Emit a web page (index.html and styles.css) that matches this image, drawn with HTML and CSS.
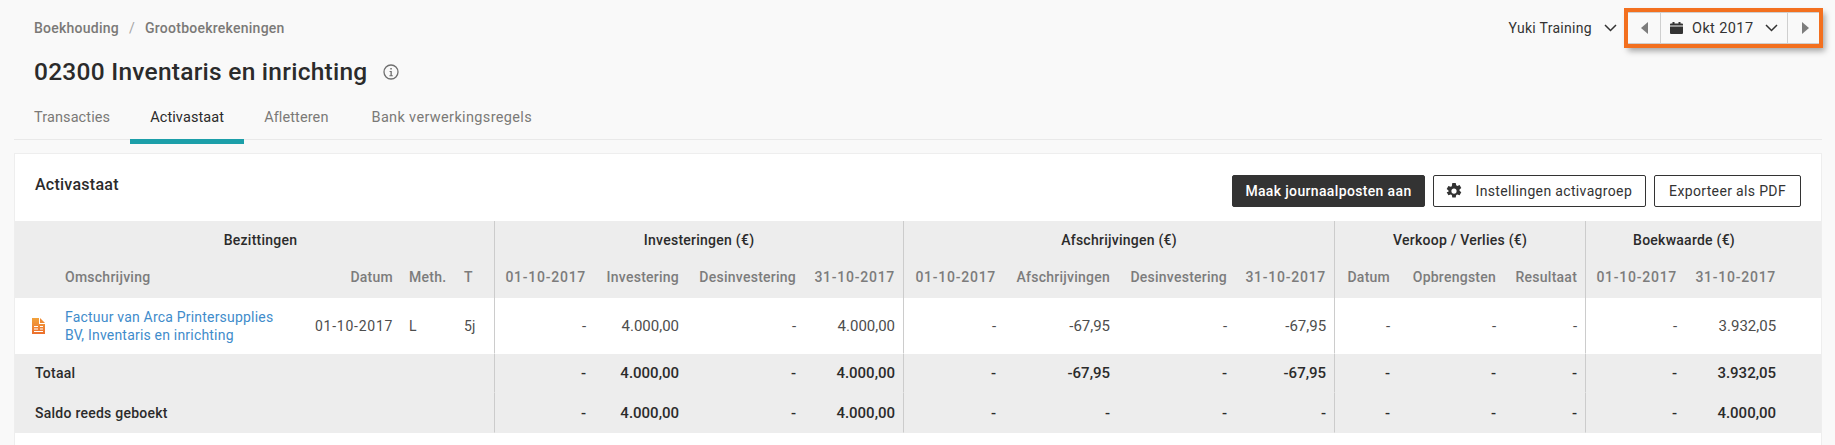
FILE: index.html
```html
<!DOCTYPE html>
<html lang="nl">
<head>
<meta charset="utf-8">
<title>Activastaat</title>
<link rel="stylesheet" href="styles.css">
</head>
<body>
<div class="page">
  <header class="top">
    <div class="heading">
      <nav class="crumbs"><span>Boekhouding</span><span class="slash">/</span><span>Grootboekrekeningen</span></nav>
      <h1 class="title">02300 Inventaris en inrichting
        <svg class="info" viewBox="0 0 16 16" width="16" height="16"><circle cx="8" cy="8" r="7" fill="none" stroke="#6f6f6f" stroke-width="1.3"/><path d="M6.6 7h2.2v4.2h1v1H6.4v-1h1.1V8H6.6zM7.3 3.9h1.5v1.6H7.3z" fill="#6f6f6f"/></svg>
      </h1>
    </div>
    <div class="tools">
      <div class="company">Yuki Training
        <svg class="chev" viewBox="0 0 13 8" width="13" height="8"><path d="M1 1l5.5 5.5L12 1" fill="none" stroke="#333" stroke-width="1.5"/></svg>
      </div>
      <div class="period">
        <div class="arrow"><svg viewBox="0 0 7 12" width="7" height="12"><path d="M7 0v12L0 6z" fill="#7d7d7d"/></svg></div>
        <div class="month">
          <svg class="cal" viewBox="0 0 13 12" width="13" height="12"><path d="M0 4.5h13V11a1 1 0 0 1-1 1H1a1 1 0 0 1-1-1zM1 1.5h1.5V0h2v1.500h4V0h2v1.500H12a1 1 0 0 1 1 1v1H0v-1a1 1 0 0 1 1-1z" fill="#333"/></svg>
          <span class="month-label">Okt 2017</span>
          <svg class="chev" viewBox="0 0 13 8" width="13" height="8"><path d="M1 1l5.500 5.500L12 1" fill="none" stroke="#333" stroke-width="1.500"/></svg>
        </div>
        <div class="arrow next"><svg viewBox="0 0 7 12" width="7" height="12"><path d="M0 0v12l7-6z" fill="#7d7d7d"/></svg></div>
      </div>
    </div>
  </header>

  <nav class="tabs">
    <a class="tab">Transacties</a>
    <a class="tab active">Activastaat</a>
    <a class="tab">Afletteren</a>
    <a class="tab">Bank verwerkingsregels</a>
  </nav>

  <section class="card">
    <div class="card-head">
      <h2 class="card-title">Activastaat</h2>
      <div class="actions">
        <button class="btn dark">Maak journaalposten aan</button>
        <button class="btn gear-btn">
          <svg viewBox="0 0 16 16" width="16" height="16"><path fill="#333" fill-rule="evenodd" d="M6.300 0h3.400l.5 2.300 1.100.6 2.300-.8 1.700 3-1.800 1.500v1.200l1.800 1.500-1.700 3-2.300-.8-1.100.6-.5 2.300H6.300l-.5-2.300-1.100-.6-2.300.8-1.700-3L2.500 8.700V7.500L.7 6l1.700-3 2.300.8 1.100-.6zM8 5.500a2.600 2.600 0 1 0 0 5.200 2.600 2.600 0 0 0 0-5.200z"/></svg>
          Instellingen activagroep</button>
        <button class="btn pdf">Exporteer als PDF</button>
      </div>
    </div>

    <table class="sheet">
      <colgroup>
        <col class="c42"><col class="c250"><col class="c94"><col class="c55"><col class="c39">
        <col class="c99"><col class="c93"><col class="c117"><col class="c100">
        <col class="c100"><col class="c114"><col class="c117"><col class="c100">
        <col class="c63"><col class="c106"><col class="c82">
        <col class="c99"><col class="c99"><col>
      </colgroup>
      <thead>
        <tr class="groups">
          <th colspan="5" class="sep first">Bezittingen</th>
          <th colspan="4" class="sep">Investeringen (€)</th>
          <th colspan="4" class="sep">Afschrijvingen (€)</th>
          <th colspan="3" class="sep">Verkoop / Verlies (€)</th>
          <th colspan="3" class="book">Boekwaarde (€)</th>
        </tr>
        <tr class="subs">
          <th></th><th class="l">Omschrijving</th><th>Datum</th><th class="l">Meth.</th><th class="l sep">T</th>
          <th class="dt">01-10-2017</th><th>Investering</th><th>Desinvestering</th><th class="sep dt">31-10-2017</th>
          <th class="dt">01-10-2017</th><th>Afschrijvingen</th><th>Desinvestering</th><th class="sep dt">31-10-2017</th>
          <th>Datum</th><th>Opbrengsten</th><th class="sep">Resultaat</th>
          <th class="dt">01-10-2017</th><th class="dt">31-10-2017</th><th></th>
        </tr>
      </thead>
      <tbody>
        <tr class="item">
          <td class="ic"><svg viewBox="0 0 13 16" width="13" height="16"><defs><linearGradient id="doc" x1="0" y1="0" x2="0" y2="1"><stop offset="0" stop-color="#f2a23c"/><stop offset="1" stop-color="#ec6f2d"/></linearGradient></defs><path fill="url(#doc)" d="M0 0h7v6h6v10H0z"/><path fill="#ee8a35" d="M8 0l5 5H8z"/><path fill="#fff" d="M2 8h4v1H2zM8 8h3v1H8zM2 10.500h4v1H2zM8 10.500h3v1H8zM2 13h9v1H2z"/></svg></td>
          <td class="l desc"><a class="link">Factuur van Arca Printersupplies BV, Inventaris en inrichting</a></td>
          <td class="dt">01-10-2017</td><td class="l">L</td><td class="l sep">5j</td>
          <td>-</td><td>4.000,00</td><td>-</td><td class="sep">4.000,00</td>
          <td>-</td><td>-67,95</td><td>-</td><td class="sep">-67,95</td>
          <td>-</td><td>-</td><td class="sep">-</td>
          <td>-</td><td>3.932,05</td><td></td>
        </tr>
        <tr class="sum">
          <td colspan="5" class="l name sep">Totaal</td>
          <td>-</td><td>4.000,00</td><td>-</td><td class="sep">4.000,00</td>
          <td>-</td><td>-67,95</td><td>-</td><td class="sep">-67,95</td>
          <td>-</td><td>-</td><td class="sep">-</td>
          <td>-</td><td>3.932,05</td><td></td>
        </tr>
        <tr class="sum">
          <td colspan="5" class="l name sep">Saldo reeds geboekt</td>
          <td>-</td><td>4.000,00</td><td>-</td><td class="sep">4.000,00</td>
          <td>-</td><td>-</td><td>-</td><td class="sep">-</td>
          <td>-</td><td>-</td><td class="sep">-</td>
          <td>-</td><td>4.000,00</td><td></td>
        </tr>
      </tbody>
    </table>
  </section>
</div>
</body>
</html>
```
FILE: styles.css
```css
* { box-sizing: border-box; }
html, body { height: 100%; }
body {
  margin: 0;
  overflow: hidden;
  background: #f9f9f9;
  font-family: Roboto, "Liberation Sans", sans-serif;
  font-size: 14px;
  letter-spacing: .25px;
  color: #333;
}
.page { padding: 12px 13px 0 14px; }

.top { display: flex; justify-content: space-between; align-items: flex-start; }
.heading { padding-left: 20px; padding-top: 6px; }
.crumbs { display: flex; line-height: 20px; color: #7b7977; font-weight: 500; }
.slash { margin: 0 10px; font-weight: 400; color: #a5a5a5; }
.title {
  display: flex; align-items: center; gap: 15px;
  margin: 20px 0 0; font-size: 24.500px; line-height: 28px; font-weight: 500; color: #2b2b2b;
}

.tools { display: flex; align-items: center; }
.company { display: flex; align-items: center; gap: 12px; color: #333; margin-right: 11px; letter-spacing: .3px; }
.period {
  display: flex; align-items: stretch; height: 32px; width: 191px; margin-right: 3px;
  border-top: 1px solid #cfcfcf; border-bottom: 1px solid #cfcfcf;
  outline: 4px solid #f3701f;
  box-shadow: 3px 4px 6px 3px rgba(0, 0, 0, .35);
  background: #f9f9f9;
}
.arrow { flex: 0 0 32px; display: flex; align-items: center; justify-content: center; }
.arrow.next { flex-basis: 31px; padding-left: 4px; }
.month {
  flex: 1; display: flex; align-items: center;
  padding: 0 9px; border-left: 1px solid #cfcfcf; border-right: 1px solid #cfcfcf;
}
.month-label { margin-left: 9px; flex: 1; font-size: 14.500px; letter-spacing: .4px; }

.tabs { display: flex; height: 33px; margin-top: 21px; border-bottom: 1px solid #e9e9e9; }
.tab { height: 37px; padding: 0 20px; line-height: 22px; font-size: 14.500px; letter-spacing: .1px; color: #7b7977; }
.tab.active { color: #2b2b2b; border-bottom: 5px solid #1c9fa9; }
.tab:last-child { margin-left: 3px; letter-spacing: .35px; }

.card { margin-top: 13px; height: 300px; background: #fff; border: 1px solid #eee; border-bottom: 0; }
.card-head { display: flex; justify-content: space-between; padding: 21px 20px 14px 20px; }
.card-title { margin: 0; font-size: 16px; line-height: 20px; font-weight: 500; color: #2b2b2b; }
.actions { display: flex; gap: 8px; }
.btn {
  display: flex; align-items: center; gap: 14px;
  height: 32px; padding: 0 13px 0 12px;
  background: #fff; border: 1px solid #333; border-radius: 2px;
  font: inherit; letter-spacing: .35px; color: #333;
}
.btn.dark { padding: 0 12px; background: #333; color: #fff; font-weight: 500; }
.btn.pdf { padding: 0 14px; }

.sheet { width: 100%; table-layout: fixed; border-collapse: separate; border-spacing: 0; }
.c39 { width: 39px; } .c42 { width: 42px; } .c55 { width: 55px; } .c63 { width: 63px; }
.c82 { width: 82px; } .c93 { width: 93px; } .c94 { width: 94px; } .c99 { width: 99px; }
.c100 { width: 100px; } .c106 { width: 106px; } .c114 { width: 114px; } .c117 { width: 117px; }
.c250 { width: 250px; }

.sheet th, .sheet td { padding: 0 8px; text-align: right; white-space: nowrap; }
.sheet .l { text-align: left; }
.sheet .sep { border-right: 1px solid #ccc; }
.sheet thead { background: #ededed; }
.groups th { height: 37px; text-align: center; font-weight: 500; color: #2b2b2b; }
.groups .first { padding-left: 20px; }
.groups .book { padding-right: 47px; }
.subs th { height: 40px; padding-bottom: 2px; font-weight: 500; color: #7c7c7c; }
.sheet .dt { letter-spacing: .75px; }

.sheet td { border-bottom: 1px solid transparent; font-size: 15px; letter-spacing: 0; }
.sheet td.l, .sheet td.dt { font-size: 14px; letter-spacing: .25px; }
.sheet td.dt { letter-spacing: .75px; }
.item td { height: 56px; color: #4d4d4d; }
.sheet .desc { white-space: normal; padding-right: 30px; line-height: 18px; }
.link { color: #3f8ccb; letter-spacing: .2px; }
.sheet .ic { padding: 0 0 0 17px; text-align: left; }
.ic svg { display: block; }
.sum td { height: 39px; background: #ededed; color: #2b2b2b; font-weight: 500; }
.sum:last-child td { height: 40px; }
.sheet .name { padding-left: 20px; font-weight: 500; }
```
